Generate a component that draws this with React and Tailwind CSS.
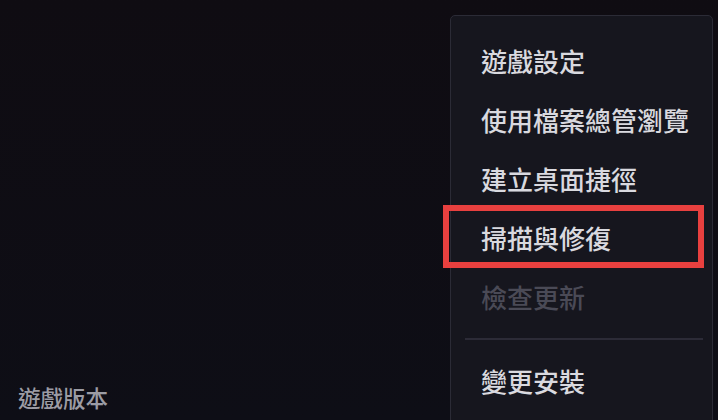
import React from 'react';

const items = [
  { label: '遊戲設定' },
  { label: '使用檔案總管瀏覽' },
  { label: '建立桌面捷徑' },
  { label: '掃描與修復', marked: true },
  { label: '檢查更新', disabled: true },
];

export default function App() {
  return (
    <div
      className="relative h-[420px] w-[718px] overflow-hidden bg-gradient-to-b from-[#0f0c12] to-[#0e0e16]"
      style={{ fontFamily: '"Noto Sans CJK TC", "Noto Sans", sans-serif' }}
    >
      <div className="flex h-full flex-col justify-end pb-[8px] pl-[18px]">
        <span className="text-[22.5px] leading-[30px] font-medium text-[#9c9ca4]">遊戲版本</span>
      </div>

      {/* context menu */}
      <div className="absolute left-[450px] top-[15px] w-[263px] h-[420px] rounded-[5px] border border-[#2b2b36] bg-[#16161e] pt-[15px]">
        {items.map((item) => (
          <div key={item.label} className="relative flex h-[59px] items-center pl-[30px]">
            <span
              className={`text-[26px] leading-none font-medium ${
                item.disabled ? 'text-[#4a4a56]' : 'text-[#d9d9df]'
              }`}
            >
              {item.label}
            </span>
            {item.marked && (
              <div className="absolute left-[-8px] right-[8px] top-[-3px] bottom-[-1px] border-[6px] border-[#e8403f]" />
            )}
          </div>
        ))}
        <div className="flex h-[25px] items-center pl-[14px] pr-[9px]">
          <div className="h-[2px] w-full bg-[#2c2b37]" />
        </div>
        <div className="flex h-[59px] items-center pl-[30px]">
          <span className="text-[26px] leading-none font-medium text-[#d9d9df]">變更安裝</span>
        </div>
      </div>
    </div>
  );
}
